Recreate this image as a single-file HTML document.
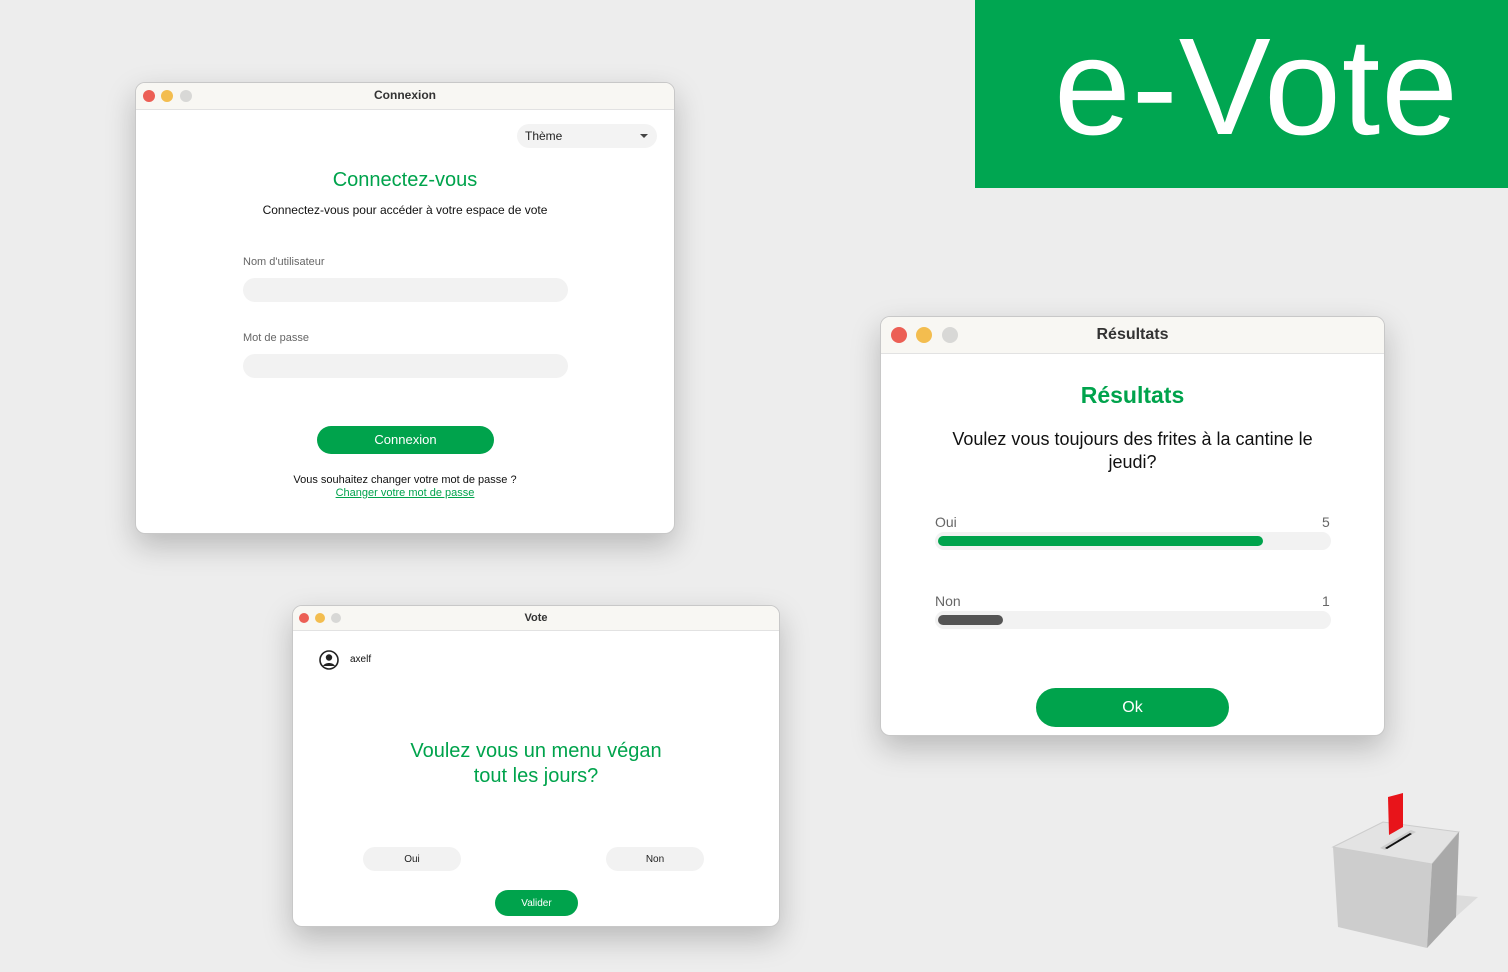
<!DOCTYPE html>
<html><head><meta charset="utf-8"><style>
*{margin:0;padding:0;box-sizing:border-box}
body{width:1508px;height:972px;background:#ededed;font-family:"Liberation Sans",sans-serif;position:relative;overflow:hidden}
.a{position:absolute}
.win{position:absolute;background:#fff;border:1px solid #c8c8c8;border-radius:10px;overflow:hidden;box-shadow:0 12px 30px rgba(0,0,0,.22)}
.tb{position:absolute;left:0;top:0;right:0;background:#f8f7f3;border-bottom:1px solid #e2e2e2;text-align:center;font-weight:bold;color:#333}
.d{position:absolute;border-radius:50%}
.g{color:#00a34c}
.btn{position:absolute;background:#00a34c;color:#fff;text-align:center;border-radius:20px}
.fld{position:absolute;background:#f2f2f2;border-radius:12px}
.c{text-align:center}
</style></head><body>
<div class="a" style="left:975px;top:0;width:533px;height:188px;background:#00a651"></div>
<div class="a" style="left:1054px;top:7px;font-size:138px;color:#fff;line-height:160px;letter-spacing:1px">e-Vote</div>

<!-- Connexion -->
<div class="win" style="left:135px;top:82px;width:540px;height:452px">
 <div class="tb" style="height:27px;font-size:12px;line-height:25px">Connexion</div>
 <div class="d" style="left:7px;top:7px;width:12px;height:12px;background:#ec5f55"></div>
 <div class="d" style="left:25px;top:7px;width:12px;height:12px;background:#f3bd4f"></div>
 <div class="d" style="left:44px;top:7px;width:12px;height:12px;background:#d8d8d6"></div>
 <div class="a" style="left:381px;top:41px;width:140px;height:24px;background:#f3f3f3;border-radius:12px;font-size:12px;line-height:24px;padding-left:8px;color:#222">Thème<span style="position:absolute;right:9px;top:10px;border-left:4px solid transparent;border-right:4px solid transparent;border-top:4px solid #444"></span></div>
 <div class="a g c" style="left:0;width:538px;top:86px;font-size:20px">Connectez-vous</div>
 <div class="a c" style="left:0;width:538px;top:120px;font-size:12px;color:#111">Connectez-vous pour accéder à votre espace de vote</div>
 <div class="a" style="left:107px;top:173px;font-size:11px;color:#666">Nom d'utilisateur</div>
 <div class="fld" style="left:107px;top:195px;width:325px;height:24px"></div>
 <div class="a" style="left:107px;top:249px;font-size:11px;color:#666">Mot de passe</div>
 <div class="fld" style="left:107px;top:271px;width:325px;height:24px"></div>
 <div class="btn" style="left:181px;top:343px;width:177px;height:28px;line-height:28px;font-size:13px">Connexion</div>
 <div class="a c" style="left:0;width:538px;top:391px;font-size:11px;color:#111">Vous souhaitez changer votre mot de passe ?</div>
 <div class="a c g" style="left:0;width:538px;top:404px;font-size:11px;text-decoration:underline">Changer votre mot de passe</div>
</div>

<!-- Vote -->
<div class="win" style="left:292px;top:605px;width:488px;height:322px">
 <div class="tb" style="height:25px;font-size:11px;line-height:24px">Vote</div>
 <div class="d" style="left:6px;top:7px;width:10px;height:10px;background:#ec5f55"></div>
 <div class="d" style="left:22px;top:7px;width:10px;height:10px;background:#f3bd4f"></div>
 <div class="d" style="left:38px;top:7px;width:10px;height:10px;background:#d8d8d6"></div>
 <svg class="a" style="left:25px;top:43px" width="22" height="22" viewBox="0 0 22 22"><circle cx="11" cy="11" r="9" fill="none" stroke="#222" stroke-width="1.6"/><circle cx="11" cy="8.5" r="3.2" fill="#222"/><path d="M5 17c2-4 10-4 12 0" fill="#222"/></svg>
 <div class="a" style="left:57px;top:48px;font-size:10px;color:#111">axelf</div>
 <div class="a g c" style="left:0;width:486px;top:133px;font-size:20px;line-height:25px">Voulez vous un menu végan<br>tout les jours?</div>
 <div class="a c" style="left:70px;top:241px;width:98px;height:24px;background:#f2f2f2;border-radius:12px;font-size:10px;line-height:25px;color:#222">Oui</div>
 <div class="a c" style="left:313px;top:241px;width:98px;height:24px;background:#f2f2f2;border-radius:12px;font-size:10px;line-height:25px;color:#222">Non</div>
 <div class="btn" style="left:202px;top:284px;width:83px;height:26px;line-height:27px;font-size:10px">Valider</div>
</div>

<!-- Résultats -->
<div class="win" style="left:880px;top:316px;width:505px;height:420px">
 <div class="tb" style="height:37px;font-size:16px;line-height:35px">Résultats</div>
 <div class="d" style="left:10px;top:10px;width:16px;height:16px;background:#ec5f55"></div>
 <div class="d" style="left:35px;top:10px;width:16px;height:16px;background:#f3bd4f"></div>
 <div class="d" style="left:61px;top:10px;width:16px;height:16px;background:#d8d8d6"></div>
 <div class="a g c" style="left:0;width:503px;top:65px;font-size:23px;font-weight:bold">Résultats</div>
 <div class="a c" style="left:60px;width:383px;top:111px;font-size:18px;line-height:23px;color:#111">Voulez vous toujours des frites à la cantine le jeudi?</div>
 <div class="a" style="left:54px;top:197px;font-size:14px;color:#666">Oui</div>
 <div class="a" style="left:441px;top:197px;font-size:14px;color:#666">5</div>
 <div class="a" style="left:54px;top:215px;width:396px;height:18px;background:#f2f2f2;border-radius:9px"></div>
 <div class="a" style="left:57px;top:219px;width:325px;height:10px;background:#00a34c;border-radius:5px"></div>
 <div class="a" style="left:54px;top:276px;font-size:14px;color:#666">Non</div>
 <div class="a" style="left:441px;top:276px;font-size:14px;color:#666">1</div>
 <div class="a" style="left:54px;top:294px;width:396px;height:18px;background:#f2f2f2;border-radius:9px"></div>
 <div class="a" style="left:57px;top:298px;width:65px;height:10px;background:#555;border-radius:5px"></div>
 <div class="btn" style="left:155px;top:371px;width:193px;height:39px;line-height:39px;font-size:16px">Ok</div>
</div>

<!-- ballot box -->
<svg class="a" style="left:1320px;top:780px" width="180" height="190" viewBox="0 0 180 190">
 <polygon points="135,115 158,117 110,160" fill="#dcdcdc"/>
 <polygon points="13,67 63,42 139,52 112,84" fill="#e3e3e3" stroke="#ccc"/>
 <polygon points="60,68 91,50 96,52 65,70" fill="#ccc"/>
 <polygon points="65,68 90,53 92,54 67,69" fill="#111"/>
 <polygon points="68,17 83,13 83,47 69,55" fill="#e8141a"/>
 <polygon points="13,67 112,84 107,168 18,147" fill="#cdcdcd"/>
 <polygon points="112,84 139,52 136,137 107,168" fill="#a9a9a9"/>
</svg>
</body></html>
